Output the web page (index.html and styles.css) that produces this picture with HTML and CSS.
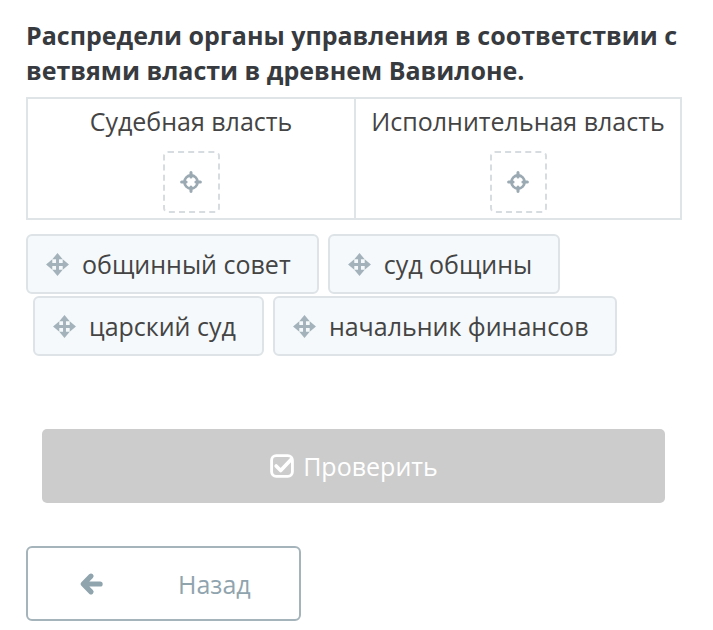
FILE: index.html
```html
<!DOCTYPE html>
<html lang="ru">
<head>
  <meta charset="UTF-8" />
  <meta name="viewport" content="width=device-width, initial-scale=1.0" />
  <title>Распредели органы управления</title>
  <link rel="stylesheet" href="styles.css">
</head>
<body>
  <div class="task">
    <h1 class="question">Распредели органы управления в соответствии с ветвями власти в древнем Вавилоне.</h1>

    <div class="groups">
      <div class="group">
        <div class="group-title">Судебная власть</div>
        <div class="drop"><span class="target"></span></div>
      </div>
      <div class="group">
        <div class="group-title">Исполнительная власть</div>
        <div class="drop"><span class="target"></span></div>
      </div>
    </div>

    <div class="chips">
      <div class="chip"><span class="move"></span>общинный совет</div>
      <div class="chip"><span class="move"></span>суд общины</div>
      <div class="chip chip-shift"><span class="move"></span>царский суд</div>
      <div class="chip"><span class="move"></span>начальник финансов</div>
    </div>

    <button class="check" disabled>
      <svg viewBox="0 0 20 20" width="26" height="26">
        <rect x="2" y="2" width="16" height="16" rx="3.5" fill="none" stroke="#fff" stroke-width="2.2"/>
        <path d="M5.5 10l3.5 3.5 8-8.5" fill="none" stroke="#fff" stroke-width="2.8" stroke-linecap="round" stroke-linejoin="round"/>
      </svg>
      Проверить
    </button>

    <button class="back">
      <svg class="back-arrow" viewBox="0 0 20 20" width="26" height="26">
        <path d="M10 4L4 10l6 6M4.5 10H17" fill="none" stroke="#90a4ae" stroke-width="4" stroke-linecap="round" stroke-linejoin="round"/>
      </svg>
      <span class="back-text">Назад</span>
    </button>
  </div>

  <script>
    // icons repeated in every chip and drop zone
    var moveIcon = '<svg viewBox="0 0 24 24" width="25" height="25" fill="#a3b2bb">' +
      '<path d="M10.6 6h2.8v12h-2.8zM6 10.6h12v2.8H6z"/>' +
      '<path d="M12 1l5 6H7zM12 23l-5-6h10zM1 12l6-5v10zM23 12l-6 5V7z"/></svg>';
    var targetIcon = '<svg viewBox="0 0 20 20" width="22" height="22">' +
      '<circle cx="10" cy="10" r="6" fill="none" stroke="#9aa9b2" stroke-width="2.4"/>' +
      '<path d="M10 1.5v4M10 14.5v4M1.5 10h4M14.5 10h4" stroke="#9aa9b2" stroke-width="2.8" stroke-linecap="round"/></svg>';
    document.querySelectorAll(".move").forEach(function (el) {
      el.innerHTML = moveIcon;
    });
    document.querySelectorAll(".target").forEach(function (el) {
      el.innerHTML = targetIcon;
    });
  </script>
</body>
</html>
```

FILE: styles.css
```css
body {
  margin: 0;
  font-family: "Open Sans", "Noto Sans", sans-serif;
  color: #444;
  background: #fff;
}

.task {
  padding: 18px 31px 0 26px;
}

.question {
  margin: 0 0 9px;
  font-size: 25px;
  line-height: 35px;
  font-weight: 700;
  color: #373a3e;
}

.groups {
  display: grid;
  grid-template-columns: 1fr 1fr;
  border: 2px solid #dfe4e6;
}

.group {
  text-align: center;
  padding: 6px 0 5px;
}

.group + .group {
  border-left: 2px solid #dfe4e6;
}

.group-title {
  font-size: 25px;
  line-height: 32px;
  color: #444;
}

.drop {
  width: 53px;
  height: 58px;
  margin: 14px auto 0;
  border: 2px dashed #d6dcdf;
  border-radius: 5px;
  display: flex;
  align-items: center;
  justify-content: center;
}

.target {
  display: flex;
}

.chips {
  display: flex;
  flex-wrap: wrap;
  column-gap: 9px;
  row-gap: 2px;
  width: 610px;
  margin-top: 14px;
}

.chip {
  display: flex;
  align-items: center;
  gap: 12px;
  height: 56px;
  padding: 0 26px 0 17px;
  background: #f5f9fb;
  border: 2px solid #dde3e6;
  border-radius: 6px;
  font-size: 25px;
  color: #444;
}

.chip-shift {
  margin-left: 7px;
}

.move {
  display: flex;
}

.check {
  display: flex;
  align-items: center;
  justify-content: center;
  gap: 8px;
  width: 623px;
  height: 74px;
  margin: 73px 0 0 16px;
  background: #cccccc;
  border: none;
  border-radius: 5px;
  color: #fff;
  font-family: inherit;
  font-size: 25px;
}

.back {
  display: flex;
  align-items: center;
  width: 275px;
  height: 75px;
  margin-top: 43px;
  padding: 0 0 0 50px;
  background: #fff;
  border: 2px solid #a5b4bb;
  border-radius: 6px;
  font-family: inherit;
  font-size: 25px;
  color: #90a4ae;
}

.back-text {
  margin-left: 74px;
}
```
